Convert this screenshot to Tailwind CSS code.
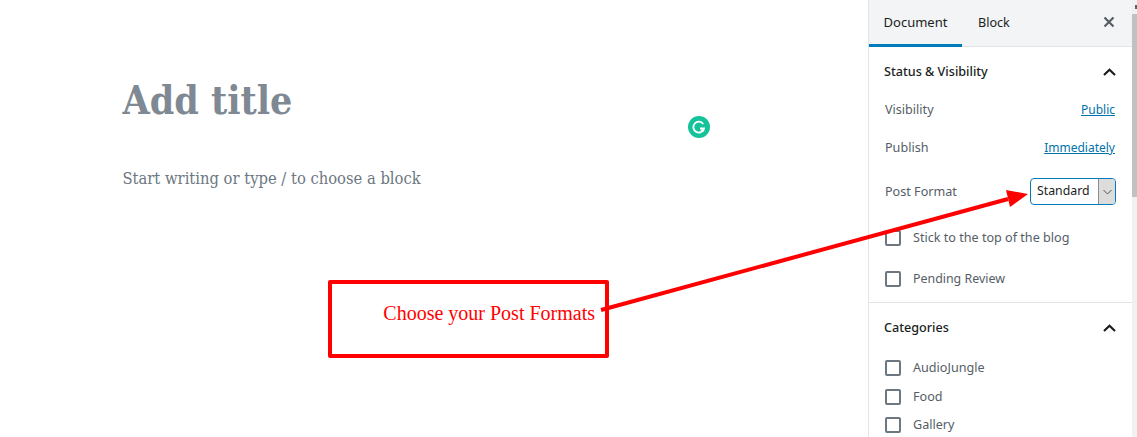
<!DOCTYPE html>
<html>
<head>
<meta charset="utf-8">
<script src="https://cdn.jsdelivr.net/npm/@tailwindcss/browser@4"></script>
</head>
<body class="bg-white">
<div class="relative flex h-[437px] w-[1137px] overflow-hidden bg-white font-['Noto_Sans',sans-serif]">
  <main class="w-[868px] shrink-0 pl-[122.5px] pt-[75px] font-['DejaVu_Serif',serif] font-stretch-condensed">
    <h1 class="text-[39px] leading-[50px] font-bold text-[#7e8993]">Add title</h1>
    <p class="mt-[43px] text-[16.4px] leading-[22px] text-[#6c7781]">Start writing or type / to choose a block</p>
  </main>

  <aside class="flex w-[264px] shrink-0 flex-col border-l border-[#e2e4e7] text-[12.6px] text-[#555d66]">
    <div class="flex h-[47px] shrink-0 items-start justify-between border-b border-[#e2e4e7] bg-[#f3f4f5]">
      <div class="flex">
        <div class="flex h-[47px] w-[93px] items-center justify-center border-b-[3px] border-[#007cba] pt-[2px] text-[13px] text-[#191e23]">Document</div>
        <div class="flex h-[47px] items-center pl-[16px] pb-[1px] text-[#191e23]">Block</div>
      </div>
      <svg class="mr-[16px] mt-[15px] h-[14px] w-[14px]" viewBox="0 0 14 14" fill="none" stroke="#555d66" stroke-width="2.2"><path d="M2.5 2.5 11.5 11.5M11.5 2.5 2.5 11.5"/></svg>
    </div>

    <section class="h-[256px] shrink-0 border-b border-[#e2e4e7] px-[16px]">
      <div class="-ml-px flex h-[50px] items-center justify-between font-medium text-[#191e23]">
        <span>Status &amp; Visibility</span>
        <svg class="h-[8px] w-[13px]" viewBox="0 0 13 8" fill="none" stroke="#191e23" stroke-width="2.2"><path d="M1 7 6.5 1.8 12 7"/></svg>
      </div>
      <div class="mb-[6px] flex h-[26px] items-center justify-between"><span>Visibility</span><a class="mr-px text-[12px] text-[#0073aa] underline">Public</a></div>
      <div class="flex h-[38px] items-center justify-between"><span>Publish</span><a class="mr-px text-[12px] text-[#0073aa] underline">Immediately</a></div>
      <div class="flex h-[50px] items-center justify-between">
        <span>Post Format</span>
        <div class="mb-[1px] flex h-[27px] w-[86px] items-stretch overflow-hidden rounded-[4px] border border-[#007cba] bg-white text-[12.3px] text-[#191e23]">
          <span class="flex flex-1 items-center pl-[6px]">Standard</span>
          <span class="flex w-[17px] items-center justify-center border-l border-[#8d8d8d] bg-[#dcdcdc]">
            <svg class="h-[6px] w-[9px]" viewBox="0 0 9 6" fill="none" stroke="#555" stroke-width="1"><path d="M.5 1 4.5 5 8.5 1"/></svg>
          </span>
        </div>
      </div>
      <label class="flex h-[41px] items-center gap-[12px]"><span class="h-[16px] w-[16px] rounded-[2px] border-2 border-[#6c7781]"></span><span class="pt-[2px]">Stick to the top of the blog</span></label>
      <label class="flex h-[41px] items-center gap-[12px]"><span class="h-[16px] w-[16px] rounded-[2px] border-2 border-[#6c7781]"></span><span class="pt-[2px] text-[12.4px]">Pending Review</span></label>
    </section>

    <section class="px-[16px]">
      <div class="-ml-px flex h-[50px] items-center justify-between font-medium text-[#191e23]">
        <span>Categories</span>
        <svg class="h-[8px] w-[13px]" viewBox="0 0 13 8" fill="none" stroke="#191e23" stroke-width="2.2"><path d="M1 7 6.5 1.8 12 7"/></svg>
      </div>
      <label class="flex h-[29px] items-center gap-[12px]"><span class="h-[16px] w-[16px] rounded-[2px] border-2 border-[#6c7781]"></span><span class="pt-[2px]">AudioJungle</span></label>
      <label class="flex h-[29px] items-center gap-[12px]"><span class="h-[16px] w-[16px] rounded-[2px] border-2 border-[#6c7781]"></span><span class="pt-[2px]">Food</span></label>
      <label class="flex h-[28px] items-center gap-[12px]"><span class="h-[16px] w-[16px] rounded-[2px] border-2 border-[#6c7781]"></span>Gallery</label>
    </section>
  </aside>

  <div class="flex w-[5px] shrink-0 flex-col bg-[#f1f1f1]">
    <div class="flex h-[14px] items-center justify-end"><div class="h-[4px] w-[2px] bg-[#606060]"></div></div>
    <div class="h-[183px] bg-[#c1c1c1]"></div>
  </div>

  <!-- Grammarly badge -->
  <div class="absolute left-[688px] top-[116px] flex h-[22px] w-[22px] items-center justify-center rounded-full bg-[#15c39a]">
    <svg class="h-[14px] w-[14px]" viewBox="0 0 14 14" fill="none" stroke="#fff" stroke-width="1.8"><path d="M11.2 4A5.4 5.4 0 1 0 12 8.5H8"/><path d="M8.8 10 12.2 11"/></svg>
  </div>

  <!-- Annotation box -->
  <div class="absolute left-[328px] top-[280px] flex h-[78px] w-[281px] items-center justify-end rounded-[2px] border-[4px] border-[#ff0000] pr-[10px] pb-[13px] font-['Liberation_Serif',serif] text-[20px] text-[#ff0000]">Choose your Post Formats</div>

  <!-- Annotation arrow -->
  <svg class="absolute left-0 top-0 h-[437px] w-[1137px]" viewBox="0 0 1137 437" fill="none">
    <path d="M601 310 1008 199" stroke="#ff0000" stroke-width="4"/>
    <path d="M1028 194 1006 190 1010 207Z" fill="#ff0000"/>
  </svg>
</div>
</body>
</html>
